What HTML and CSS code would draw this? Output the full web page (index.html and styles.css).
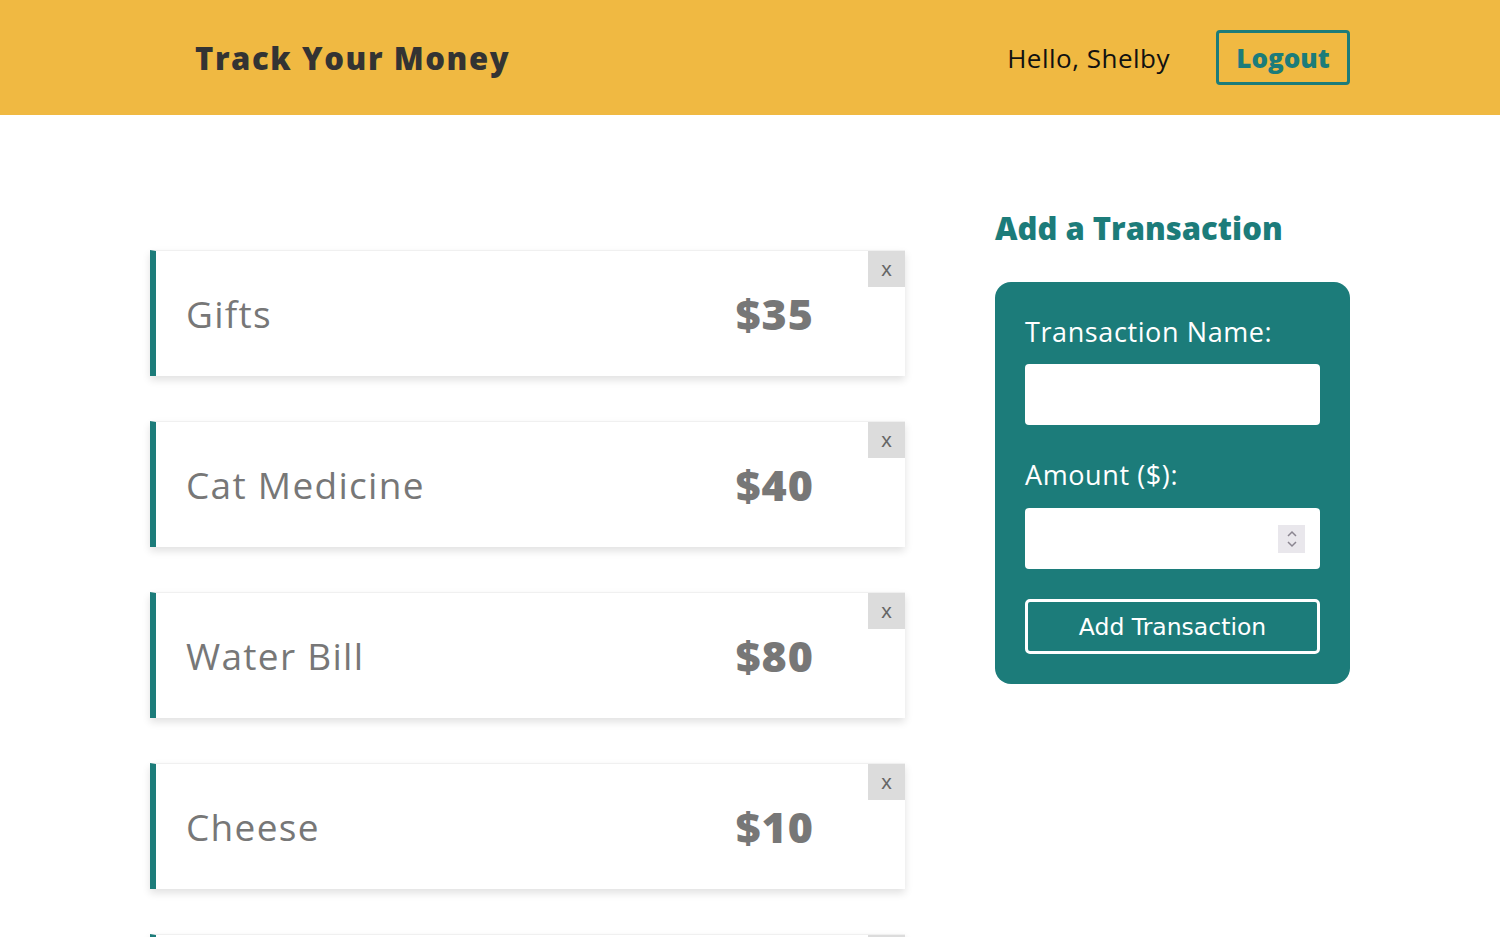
FILE: index.html
```html
<!DOCTYPE html>
<html lang="en">
<head>
<meta charset="utf-8">
<title>Track Your Money</title>
<link rel="stylesheet" href="styles.css">
</head>
<body>
<header class="topbar">
  <h1 class="brand">Track Your Money</h1>
  <div class="user">
    <span class="hello">Hello, Shelby</span>
    <button class="logout">Logout</button>
  </div>
</header>
<main class="content">
  <section class="list">
    <div class="card"><span class="name">Gifts</span><span class="amount">$35</span><button class="del">x</button></div>
    <div class="card"><span class="name">Cat Medicine</span><span class="amount">$40</span><button class="del">x</button></div>
    <div class="card"><span class="name">Water Bill</span><span class="amount">$80</span><button class="del">x</button></div>
    <div class="card"><span class="name">Cheese</span><span class="amount">$10</span><button class="del">x</button></div>
    <div class="card"><span class="name">Rent</span><span class="amount">$900</span><button class="del">x</button></div>
  </section>
  <aside class="side">
    <h2 class="side-title">Add a Transaction</h2>
    <form class="panel">
      <label class="lbl">Transaction Name:</label>
      <input class="field" type="text">
      <label class="lbl lbl2">Amount ($):</label>
      <div class="numwrap">
        <input class="field" type="text">
        <span class="spin"><svg width="16" height="22" viewBox="0 0 16 22"><path d="M4 8 L8 4 L12 8" fill="none" stroke="#8a8590" stroke-width="1.5"/><path d="M4 14 L8 18 L12 14" fill="none" stroke="#8a8590" stroke-width="1.5"/></svg></span>
      </div>
      <button class="add" type="button">Add Transaction</button>
    </form>
  </aside>
</main>
</body>
</html>
```
FILE: styles.css
```css
* { box-sizing: border-box; }
html, body { margin: 0; padding: 0; }
body {
  font-family: "Open Sans", "Liberation Sans", sans-serif;
  background: #fff;
  height: 937px;
  overflow: hidden;
}
.topbar {
  height: 115px;
  background: #F0B942;
  display: flex;
  align-items: center;
  justify-content: space-between;
  padding: 0 150px 0 195px;
}
.brand {
  margin: 0;
  font-size: 31px;
  font-weight: 800;
  color: #333;
  letter-spacing: 1.6px;
}
.user {
  display: flex;
  align-items: center;
  gap: 46px;
}
.hello {
  font-size: 26px;
  letter-spacing: 0.5px;
  color: #111;
}
.logout {
  width: 134px;
  height: 55px;
  background: transparent;
  border: 3px solid #1C7C7A;
  border-radius: 4px;
  color: #1C7C7A;
  font-family: inherit;
  font-size: 26px;
  font-weight: 800;
  padding: 0;
}
.content {
  display: flex;
  gap: 90px;
  padding: 91px 150px 0 150px;
}
.list {
  width: 755px;
  padding-top: 44px;
  display: flex;
  flex-direction: column;
  gap: 45px;
}
.card {
  position: relative;
  height: 126px;
  border-left: 6px solid #1C7C7A;
  border-top: 1px solid #f0f0f0;
  background: #fff;
  box-shadow: 0 4px 8px rgba(0,0,0,0.12);
  display: flex;
  align-items: center;
  justify-content: space-between;
  padding: 0 91px 0 30px;
  flex-shrink: 0;
}
.name {
  font-size: 37px;
  letter-spacing: 1.3px;
  color: #777;
}
.amount {
  font-size: 43px;
  font-weight: 800;
  letter-spacing: 1px;
  color: #777;
}
.del {
  position: absolute;
  top: 0;
  right: 0;
  width: 37px;
  height: 36px;
  background: #dcdcdc;
  border: none;
  color: #666;
  font-family: "Liberation Sans", sans-serif;
  font-size: 21px;
  padding: 0;
}
.side {
  width: 355px;
}
.side-title {
  margin: 0 0 32px 0;
  font-size: 31px;
  font-weight: 800;
  color: #1C7C7A;
  line-height: 44px;
}
.panel {
  background: #1C7C7A;
  border-radius: 16px;
  padding: 30px 30px 30px 30px;
  display: flex;
  flex-direction: column;
}
.lbl {
  color: #fff;
  font-size: 27px;
  letter-spacing: 0.6px;
  line-height: 40px;
  margin-bottom: 12px;
}
.lbl2 { margin-top: 30px; margin-bottom: 13px; }
.field {
  width: 100%;
  height: 61px;
  border: none;
  border-radius: 4px;
  background: #fff;
  display: block;
}
.numwrap { position: relative; }
.spin {
  position: absolute;
  right: 15px;
  top: 17px;
  width: 27px;
  height: 28px;
  background: #e9e7ec;
  display: flex;
  align-items: center;
  justify-content: center;
}
.add {
  margin-top: 30px;
  height: 55px;
  background: transparent;
  border: 3px solid #fff;
  border-radius: 5px;
  color: #fff;
  font-family: "DejaVu Sans", sans-serif;
  font-size: 23.5px;
  padding: 0;
}
```
